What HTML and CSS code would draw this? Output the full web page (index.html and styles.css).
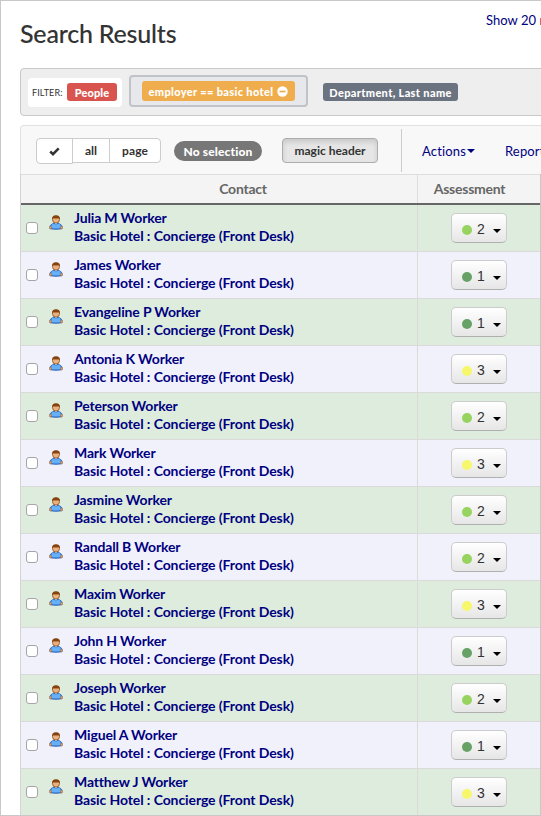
FILE: index.html
```
<!DOCTYPE html>
<html lang="en">
<head>
<meta charset="utf-8">
<title>Search Results</title>
<link rel="stylesheet" href="styles.css">
</head>
<body>
<svg class="defs" width="0" height="0" aria-hidden="true">
  <symbol id="person" viewBox="0 0 14 15">
    <path d="M.6 14Q.2 9.8 3.4 8.4L4.8 7.6H9.2L10.6 8.4Q13.8 9.8 13.4 14Q7 15.4.6 14Z" fill="#2864bd"/>
    <path d="M2.2 13Q1.8 9.4 4.5 8.6Q7 10.5 9.5 8.6Q12.2 9.4 11.8 13Q7 14 2.2 13Z" fill="#64b1fa"/>
    <path d="M.5 11.2L2 11.3L2.4 14Q.5 14.3.5 12.8ZM13.5 11.2L12 11.3L11.6 14Q13.5 14.3 13.5 12.8Z" fill="#e8a868" stroke="#a8693c" stroke-width=".5"/>
    <path d="M4.9 7.2L7 9.4L9.1 7.2Z" fill="#eeeae5"/>
    <circle cx="7" cy="4.6" r="3.5" fill="#e9b17e" stroke="#8c4c1e" stroke-width=".8"/>
    <path d="M3.1 4.6Q2.5.4 7 .3Q11.5.4 10.9 4.6L9.7 3.2Q7 3.8 4.3 3.2Z" fill="#86430f"/>
  </symbol>
</svg>
<div class="window">
  <header class="top">
    <h1>Search Results</h1>
    <a class="show">Show 20 <span>more</span></a>
  </header>
  <div class="filters">
    <div class="filter-kind"><span class="filter-word">FILTER:</span><span class="label red">People</span></div>
    <div class="filter-active"><span class="label orange">employer == basic hotel <svg width="11" height="11" viewBox="0 0 11 11"><circle cx="5.5" cy="5.5" r="5.2" fill="#fff"/><path d="M2.5 5.5H8.5" stroke="#f0ad4e" stroke-width="1.7"/></svg></span></div>
    <span class="label slate">Department, Last name</span>
  </div>
  <div class="toolbar">
    <div class="group">
      <button class="check"><svg width="11" height="9" viewBox="0 0 11 9"><path d="M1.2 4.5L4 7.2L9.7 1.4" fill="none" stroke="#333" stroke-width="2.5"/></svg></button><button class="all">all</button><button class="page">page</button>
    </div>
    <span class="pill">No selection</span>
    <button class="magic">magic header</button>
    <nav><a class="actions">Actions<i class="caret"></i></a><a class="reports">Reports</a></nav>
  </div>
  <div class="table">
    <div class="row head"><div class="contact-head">Contact</div><div class="assess-head">Assessment</div></div>
    <div class="row green"><div class="contact"><span class="box"></span><svg class="person"><use href="#person"/></svg><div class="who"><b class="name">Julia M Worker</b><b class="job">Basic Hotel : Concierge (Front Desk)</b></div></div><div class="assess"><button class="score"><i class="dot two"></i><span>2</span><i class="caret"></i></button></div></div>
    <div class="row"><div class="contact"><span class="box"></span><svg class="person"><use href="#person"/></svg><div class="who"><b class="name">James Worker</b><b class="job">Basic Hotel : Concierge (Front Desk)</b></div></div><div class="assess"><button class="score"><i class="dot one"></i><span>1</span><i class="caret"></i></button></div></div>
    <div class="row green"><div class="contact"><span class="box"></span><svg class="person"><use href="#person"/></svg><div class="who"><b class="name">Evangeline P Worker</b><b class="job">Basic Hotel : Concierge (Front Desk)</b></div></div><div class="assess"><button class="score"><i class="dot one"></i><span>1</span><i class="caret"></i></button></div></div>
    <div class="row"><div class="contact"><span class="box"></span><svg class="person"><use href="#person"/></svg><div class="who"><b class="name">Antonia K Worker</b><b class="job">Basic Hotel : Concierge (Front Desk)</b></div></div><div class="assess"><button class="score"><i class="dot three"></i><span>3</span><i class="caret"></i></button></div></div>
    <div class="row green"><div class="contact"><span class="box"></span><svg class="person"><use href="#person"/></svg><div class="who"><b class="name">Peterson Worker</b><b class="job">Basic Hotel : Concierge (Front Desk)</b></div></div><div class="assess"><button class="score"><i class="dot two"></i><span>2</span><i class="caret"></i></button></div></div>
    <div class="row"><div class="contact"><span class="box"></span><svg class="person"><use href="#person"/></svg><div class="who"><b class="name">Mark Worker</b><b class="job">Basic Hotel : Concierge (Front Desk)</b></div></div><div class="assess"><button class="score"><i class="dot three"></i><span>3</span><i class="caret"></i></button></div></div>
    <div class="row green"><div class="contact"><span class="box"></span><svg class="person"><use href="#person"/></svg><div class="who"><b class="name">Jasmine Worker</b><b class="job">Basic Hotel : Concierge (Front Desk)</b></div></div><div class="assess"><button class="score"><i class="dot two"></i><span>2</span><i class="caret"></i></button></div></div>
    <div class="row"><div class="contact"><span class="box"></span><svg class="person"><use href="#person"/></svg><div class="who"><b class="name">Randall B Worker</b><b class="job">Basic Hotel : Concierge (Front Desk)</b></div></div><div class="assess"><button class="score"><i class="dot two"></i><span>2</span><i class="caret"></i></button></div></div>
    <div class="row green"><div class="contact"><span class="box"></span><svg class="person"><use href="#person"/></svg><div class="who"><b class="name">Maxim Worker</b><b class="job">Basic Hotel : Concierge (Front Desk)</b></div></div><div class="assess"><button class="score"><i class="dot three"></i><span>3</span><i class="caret"></i></button></div></div>
    <div class="row"><div class="contact"><span class="box"></span><svg class="person"><use href="#person"/></svg><div class="who"><b class="name">John H Worker</b><b class="job">Basic Hotel : Concierge (Front Desk)</b></div></div><div class="assess"><button class="score"><i class="dot one"></i><span>1</span><i class="caret"></i></button></div></div>
    <div class="row green"><div class="contact"><span class="box"></span><svg class="person"><use href="#person"/></svg><div class="who"><b class="name">Joseph Worker</b><b class="job">Basic Hotel : Concierge (Front Desk)</b></div></div><div class="assess"><button class="score"><i class="dot two"></i><span>2</span><i class="caret"></i></button></div></div>
    <div class="row"><div class="contact"><span class="box"></span><svg class="person"><use href="#person"/></svg><div class="who"><b class="name">Miguel A Worker</b><b class="job">Basic Hotel : Concierge (Front Desk)</b></div></div><div class="assess"><button class="score"><i class="dot one"></i><span>1</span><i class="caret"></i></button></div></div>
    <div class="row green"><div class="contact"><span class="box"></span><svg class="person"><use href="#person"/></svg><div class="who"><b class="name">Matthew J Worker</b><b class="job">Basic Hotel : Concierge (Front Desk)</b></div></div><div class="assess"><button class="score"><i class="dot three"></i><span>3</span><i class="caret"></i></button></div></div>
  </div>
</div>
</body>
</html>
```
FILE: styles.css
```
* { box-sizing: border-box; }
html, body { margin: 0; height: 816px; overflow: hidden; }
body { width: 541px; background: #fff; font-family: Lato, "Liberation Sans", sans-serif; font-size: 14px; color: #333; white-space: nowrap; }
.defs { position: absolute; }
.window { width: 541px; height: 816px; overflow: hidden; border: 1px solid #c8c8c8; border-right: 0; display: flex; flex-direction: column; }
button { font-family: inherit; margin: 0; padding: 0; }
svg { flex: none; }
.top { height: 67px; flex: none; display: flex; padding-left: 19px; }
h1 { margin: 16px 0 0; width: 466px; flex: none; font-size: 25px; line-height: 32px; font-weight: 500; -webkit-text-stroke: .1px #333; letter-spacing: -.2px; }
.show { margin-top: 10px; line-height: 18px; font-size: 13px; color: #000080; letter-spacing: .05px; }
.show span { color: #800060; }
.filters { margin-left: 19px; width: 560px; height: 48px; flex: none; display: flex; align-items: flex-start; background: #eee; border: 1px solid #c8c8c8; border-radius: 4px; padding: 6px 0 0 7px; }
.label { display: flex; align-items: center; justify-content: center; height: 18px; border-radius: 3px; color: #fff; font-size: 11px; font-weight: 900; letter-spacing: .35px; }
.red { width: 50px; background: #d9534f; letter-spacing: .1px; }
.orange { width: 153px; height: 20px; background: #f0ad4e; gap: 4px; }
.slate { width: 135px; margin: 8px 0 0 15px; background: #6b7380; }
.filter-kind { width: 94px; height: 29px; margin: 3px 7px 0 0; display: flex; align-items: center; justify-content: space-between; padding: 0 5px 1px 4px; background: #fff; border-radius: 4px; }
.filter-word { font-size: 9px; letter-spacing: .1px; }
.filter-active { width: 179px; height: 32px; display: flex; align-items: center; justify-content: center; background: #e6e8ec; border: 2px solid #c0c4c8; border-radius: 4px; }
.toolbar { margin: 9px 0 0 19px; width: 560px; height: 49px; flex: none; display: flex; align-items: flex-start; background: #f8f8f8; border: 1px solid #e1e1e1; border-bottom: 0; border-radius: 4px 0 0 0; padding-left: 15px; }
.group { display: flex; margin-top: 12px; width: 125px; height: 26px; align-items: flex-start; }
.group button { height: 25px; background: #fff; border: 1px solid #ccc; font-size: 12px; font-weight: 700; color: #333; line-height: 22px; }
.group .check { width: 37px; height: 26px; border-radius: 4px 0 0 4px; display: flex; align-items: center; justify-content: center; }
.group .all { width: 38px; margin-left: -1px; }
.group .page { width: 52px; margin-left: -1px; border-radius: 0 4px 4px 0; letter-spacing: .15px; }
.pill { margin: 15px 0 0 13px; width: 88px; height: 20px; border-radius: 10px; background: #777; color: #fff; font-size: 12px; font-weight: 900; line-height: 21px; text-align: center; letter-spacing: .15px; }
.magic { margin: 12px 0 0 20px; width: 96px; height: 25px; border: 1px solid #adadad; border-radius: 4px; background: #e6e6e6; box-shadow: inset 0 3px 5px rgba(0,0,0,.125); font-size: 12px; font-weight: 700; line-height: 22px; color: #333; }
nav { margin: 3px 0 0 23px; height: 43px; border-left: 1px solid #ccc; display: flex; padding-left: 20px; line-height: 44px; color: #000080; font-size: 13px; letter-spacing: .15px; }
.actions { width: 83px; display: flex; align-items: center; }
.actions .caret { margin-left: 1px; }
.caret { width: 0; height: 0; border: 4px solid transparent; border-top-color: currentColor; border-bottom: 0; }
.table { margin-left: 19px; width: 521px; flex: none; border-left: 1px solid #d4d4d4; border-right: 1px solid #c8c8c8; }
.row { display: flex; height: 47px; background: #f1f1fb; border-bottom: 1px solid #dadada; }
.green { background: #ddecdd; }
.head { height: 31px; background: #f4f4f4; border-top: 1px solid #ddd; border-bottom: 2px solid #666; font-weight: 700; color: #666; line-height: 27px; letter-spacing: -.25px; }
.contact-head { width: 397px; padding-left: 48px; text-align: center; border-right: 1px solid #ddd; }
.assess-head { flex: 1; padding-right: 19px; text-align: center; }
.contact { width: 397px; border-right: 1px solid #dadada; display: flex; padding: 4px 0 0 5px; }
.box { width: 12px; height: 12px; margin-top: 13px; border: 1px solid #a5a5a5; border-radius: 3px; background: #fff; flex: none; }
.person { width: 14px; height: 15px; margin: 6px 11px 0; }
.who { display: flex; flex-direction: column; line-height: 18px; color: #000080; font-size: 14px; letter-spacing: -.1px; }
.name { letter-spacing: -.15px; }
.assess { flex: 1; display: flex; justify-content: center; padding-top: 8px; }
.score { width: 56px; height: 30px; border: 1px solid #ccc; border-bottom-color: #b0b0b0; border-radius: 5px; background: linear-gradient(#fff, #e6e6e6); display: flex; align-items: center; padding-left: 10px; color: #333; font: 14px "Liberation Sans", sans-serif; }
.dot { width: 10px; height: 10px; border-radius: 50%; margin-top: 3px; }
.score span { width: 8px; margin: 1px 8px 0 5px; }
.score .caret { color: #000; margin-top: 5px; }
.one { background: #66a266; }
.two { background: #96d35f; }
.three { background: #f7f76b; }
```
